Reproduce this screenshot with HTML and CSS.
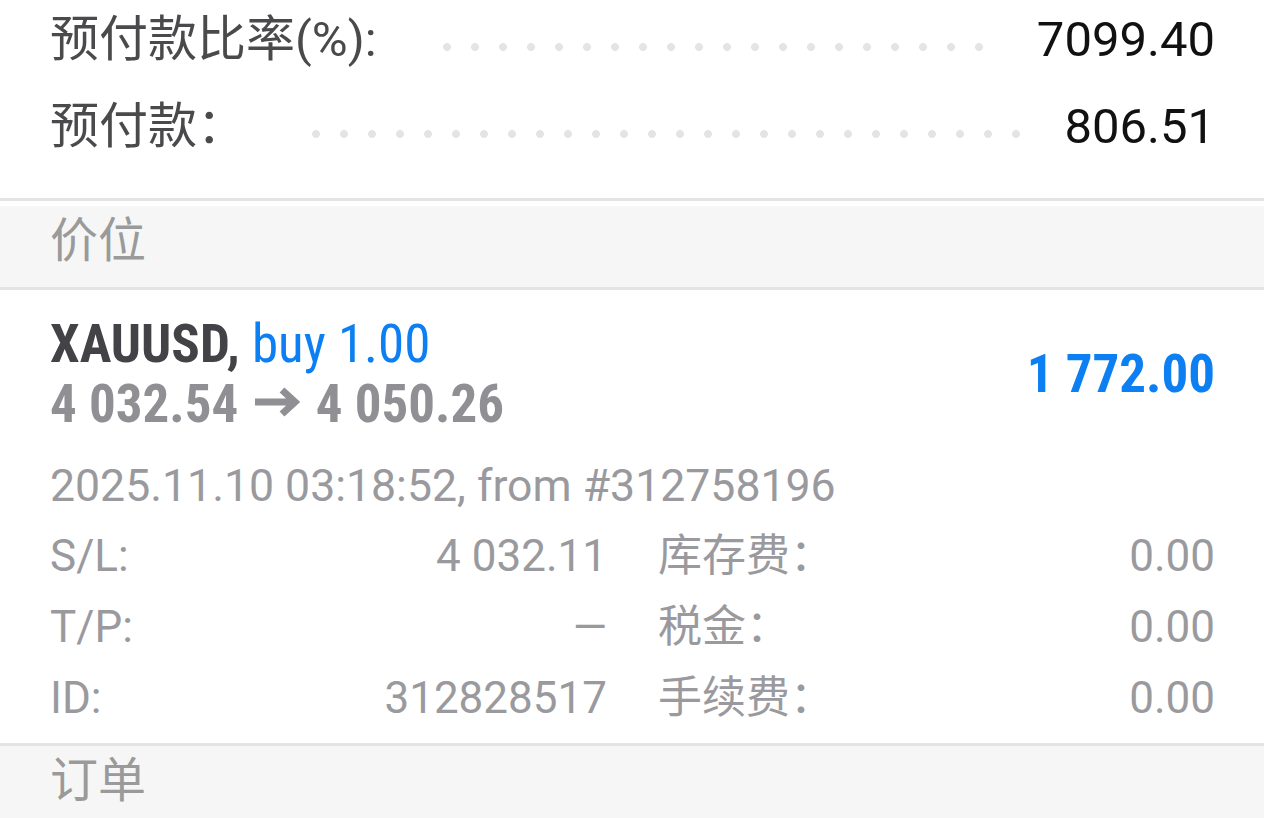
FILE: index.html
```html
<!DOCTYPE html>
<html>
<head>
    <meta charset="utf-8">
    <title>Trade</title>
    <link rel="stylesheet" href="styles.css">
</head>
<body>
    <div class="summary">
        <div class="stat-row">
            <span class="stat-label">预付款比率(%):</span>
            <span class="leader"></span>
            <span class="stat-value">7099.40</span>
        </div>
        <div class="stat-row">
            <span class="stat-label">预付款：</span>
            <span class="leader"></span>
            <span class="stat-value">806.51</span>
        </div>
    </div>

    <div class="section-header">价位</div>

    <div class="position">
        <div class="position-head">
            <div class="position-title">
                <div class="title-line"><span class="symbol">XAUUSD,</span> <span class="deal">buy 1.00</span></div>
                <div class="title-line price-move">4 032.54 <svg class="arrow" width="45" height="30" viewBox="0 0 45 30"><path d="M0 15H40M27 3L40 15L27 27" fill="none" stroke="currentColor" stroke-width="7"/></svg> 4 050.26</div>
            </div>
            <div class="profit">1 772.00</div>
        </div>
        <div class="position-time">2025.11.10 03:18:52, from #312758196</div>
        <div class="details">
            <div class="detail"><span>S/L:</span><span>4 032.11</span></div>
            <div class="detail"><span>库存费：</span><span>0.00</span></div>
            <div class="detail"><span>T/P:</span><span>—</span></div>
            <div class="detail"><span>税金：</span><span>0.00</span></div>
            <div class="detail"><span>ID:</span><span>312828517</span></div>
            <div class="detail"><span>手续费：</span><span>0.00</span></div>
        </div>
    </div>

    <div class="section-header">订单</div>
</body>
</html>
```

FILE: styles.css
```css
body {
    font-family: Roboto, "Noto Sans CJK SC", sans-serif;
    margin: 0;
    padding: 0;
    background: #fff;
    color: #111;
    overflow: hidden;
}

/* Account summary */
.summary {
    margin-top: -4px;
    padding: 0 49px 28px 50px;
    border-bottom: 3px solid #e4e4e4;
    margin-bottom: 5px;
}

.stat-row {
    display: flex;
    align-items: center;
    height: 87px;
    font-size: 49px;
    line-height: 87px;
}

.stat-label {
    color: #4a4a4c;
}

.stat-value {
    color: #111;
}

.leader {
    flex: 1;
    height: 8px;
    margin: 14px 38px 0 56px;
    background-image: radial-gradient(circle, #e4e4e4 3.6px, transparent 4.2px);
    background-size: 28px 8px;
    background-repeat: repeat-x;
}

/* Section headers */
.section-header {
    height: 81px;
    padding: 0 50px;
    background: #f6f6f6;
    border-bottom: 3px solid #e4e4e4;
    color: #9a9a9a;
    font-size: 48px;
    line-height: 69px;
}

/* Position card */
.position {
    padding: 24px 49px 9px 50px;
    border-bottom: 3px solid #e4e4e4;
}

.position-head {
    display: flex;
    justify-content: space-between;
    align-items: center;
}

.title-line {
    font-family: "Roboto Condensed", Roboto, sans-serif;
    font-size: 53px;
    line-height: 60px;
    white-space: nowrap;
}

.symbol {
    font-weight: 700;
    color: #434347;
}

.deal {
    color: #0c7ff2;
}

.price-move {
    font-weight: 700;
    color: #8f8f94;
}

.arrow {
    vertical-align: 5px;
    margin: 0 4px;
}

.profit {
    font-family: "Roboto Condensed", Roboto, sans-serif;
    font-weight: 700;
    font-size: 53px;
    color: #0c7ff2;
}

.position-time {
    margin-top: 17px;
    font-size: 44.6px;
    line-height: 70px;
    color: #9a9a9e;
    white-space: nowrap;
}

.details {
    display: grid;
    grid-template-columns: 1fr 1fr;
    column-gap: 51px;
    font-size: 44px;
    line-height: 71px;
    color: #9a9a9e;
}

.detail {
    display: flex;
    justify-content: space-between;
}
```
